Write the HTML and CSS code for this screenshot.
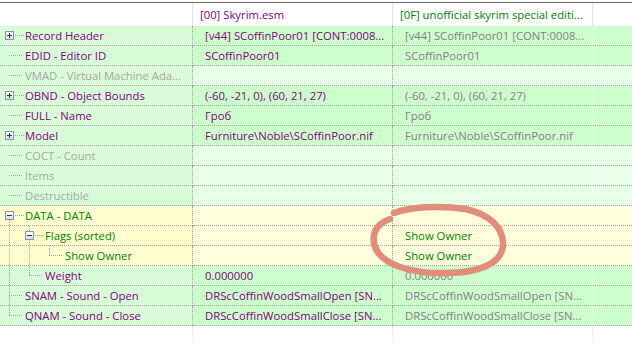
FILE: index.html
```html
<!DOCTYPE html>
<html>
  <head>
  <link rel="stylesheet" href="styles.css">
  </head>
  <body>
    <div class="tree">
      <div class="head">
        <div class="hc"></div>
        <div class="hc pu">[00] Skyrim.esm</div>
        <div class="hc gn">[0F] unofficial skyrim special editi...</div>
        <div class="hc last"></div>
      </div>

      <div class="row std">
        <div class="cell c1"><span class="tw boxh"><i class="box plus"></i></span><span class="name pu">Record Header</span></div>
        <div class="cell c2 pu">[v44] SCoffinPoor01 [CONT:0008...</div>
        <div class="cell c3 dim">[v44] SCoffinPoor01 [CONT:0008...</div>
        <div class="cell c4"></div>
      </div>
      <div class="row std">
        <div class="cell c1"><span class="tw h"></span><span class="name pu">EDID - Editor ID</span></div>
        <div class="cell c2 pu">SCoffinPoor01</div>
        <div class="cell c3 dim">SCoffinPoor01</div>
        <div class="cell c4"></div>
      </div>
      <div class="row emp">
        <div class="cell c1"><span class="tw h"></span><span class="name gr">VMAD - Virtual Machine Ada...</span></div>
        <div class="cell c2"></div>
        <div class="cell c3"></div>
        <div class="cell c4"></div>
      </div>
      <div class="row std">
        <div class="cell c1"><span class="tw boxh"><i class="box plus"></i></span><span class="name pu">OBND - Object Bounds</span></div>
        <div class="cell c2 pu">(-60, -21, 0), (60, 21, 27)</div>
        <div class="cell c3 dim">(-60, -21, 0), (60, 21, 27)</div>
        <div class="cell c4"></div>
      </div>
      <div class="row std">
        <div class="cell c1"><span class="tw h"></span><span class="name pu">FULL - Name</span></div>
        <div class="cell c2 pu">Гроб</div>
        <div class="cell c3 dim">Гроб</div>
        <div class="cell c4"></div>
      </div>
      <div class="row std">
        <div class="cell c1"><span class="tw boxh"><i class="box plus"></i></span><span class="name pu">Model</span></div>
        <div class="cell c2 pu">Furniture\Noble\SCoffinPoor.nif</div>
        <div class="cell c3 dim">Furniture\Noble\SCoffinPoor.nif</div>
        <div class="cell c4"></div>
      </div>
      <div class="row emp">
        <div class="cell c1"><span class="tw h"></span><span class="name gr">COCT - Count</span></div>
        <div class="cell c2"></div>
        <div class="cell c3"></div>
        <div class="cell c4"></div>
      </div>
      <div class="row emp">
        <div class="cell c1"><span class="tw h"></span><span class="name gr">Items</span></div>
        <div class="cell c2"></div>
        <div class="cell c3"></div>
        <div class="cell c4"></div>
      </div>
      <div class="row emp">
        <div class="cell c1"><span class="tw h"></span><span class="name gr">Destructible</span></div>
        <div class="cell c2"></div>
        <div class="cell c3"></div>
        <div class="cell c4"></div>
      </div>
      <div class="row dat">
        <div class="cell c1"><span class="tw boxdown"><i class="box"></i></span><span class="name gn">DATA - DATA</span></div>
        <div class="cell c2"></div>
        <div class="cell c3"></div>
        <div class="cell c4"></div>
      </div>
      <div class="row dat">
        <div class="cell c1"><span class="ind pipe"></span><span class="tw boxtee"><i class="box"></i></span><span class="name gn">Flags (sorted)</span></div>
        <div class="cell c2"></div>
        <div class="cell c3 gn">Show Owner</div>
        <div class="cell c4"></div>
      </div>
      <div class="row dat">
        <div class="cell c1"><span class="ind pipe"></span><span class="ind pipe"></span><span class="tw end"></span><span class="name gn">Show Owner</span></div>
        <div class="cell c2"></div>
        <div class="cell c3 gn">Show Owner</div>
        <div class="cell c4"></div>
      </div>
      <div class="row std">
        <div class="cell c1"><span class="ind pipe"></span><span class="tw end"></span><span class="name pu">Weight</span></div>
        <div class="cell c2 pu">0.000000</div>
        <div class="cell c3 dim">0.000000</div>
        <div class="cell c4"></div>
      </div>
      <div class="row std">
        <div class="cell c1"><span class="tw tee"></span><span class="name pu">SNAM - Sound - Open</span></div>
        <div class="cell c2 pu">DRScCoffinWoodSmallOpen [SN...</div>
        <div class="cell c3 dim">DRScCoffinWoodSmallOpen [SN...</div>
        <div class="cell c4"></div>
      </div>
      <div class="row std">
        <div class="cell c1"><span class="tw end"></span><span class="name pu">QNAM - Sound - Close</span></div>
        <div class="cell c2 pu">DRScCoffinWoodSmallClose [SN...</div>
        <div class="cell c3 dim">DRScCoffinWoodSmallClose [SN...</div>
        <div class="cell c4"></div>
      </div>

      <div class="filler">
        <div class="fc"></div><div class="fc"></div><div class="fc"></div><div class="fc last"></div>
      </div>

      <!-- hand drawn marker round the flags -->
      <svg class="mark" width="632" height="342" viewBox="0 0 632 342">
        <path d="M 394 213 C 410 207, 440 205, 465 209 C 490 214, 504 228, 503 246 C 501 264, 478 273, 446 273 C 415 274, 386 266, 377 251 C 370 238, 374 224, 390 219" fill="none" stroke="#e08e7b" stroke-width="6.5" stroke-linecap="round" stroke-linejoin="round"/>
      </svg>
    </div>
  </body>
</html>
```

FILE: styles.css
```css
body {
  margin: 0;
  background-color: #fff;
  font-family: "Open Sans", "Noto Sans", sans-serif;
  font-size: 11.3px;
}
.tree {
  position: relative;
  width: 632px;
  height: 342px;
  overflow: hidden;
  display: flex;
  flex-direction: column;
}
.head {
  display: grid;
  grid-template-columns: 193px 200px 200px 1fr;
  margin-top: 2px;
  height: 24px;
  box-sizing: border-box;
  border-top: 1px solid #6b6b6b;
  flex: none;
}
.hc {
  border-right: 1px solid #e2e2e2;
  padding: 0 4px 0 7px;
  line-height: 23px;
  white-space: nowrap;
  overflow: hidden;
}
.hc.last { border-right: none; }

.row {
  display: grid;
  grid-template-columns: 193px 200px 200px 1fr;
  height: 20px;
  flex: none;
}
.cell {
  border-bottom: 1px dotted #a0a0a0;
  line-height: 19px;
  height: 19px;
  white-space: nowrap;
  overflow: hidden;
}
.c1 {
  display: flex;
  border-right: 1px dotted #a0a0a0;
}
.c2 {
  border-right: 1px dotted #a0a0a0;
  padding: 0 4px 0 12px;
}
.c3 {
  border-right: 1px dotted #fff;
  padding: 0 4px 0 12px;
}
.name {
  padding-left: 1px;
  min-width: 0;
  overflow: hidden;
}

.std .c1, .emp .c1 { background-color: #d8fcd8; }
.std .c2, .std .c3, .std .c4 { background-color: #ccffcc; }
.emp .c2, .emp .c3, .emp .c4 { background-color: #e8ffe8; }
.dat .c1 { background-color: #ffffd0; }
.dat .c2, .dat .c3, .dat .c4 { background-color: #ffffdc; }

.pu { color: #800080; }
.gr { color: #a6a6a6; }
.gn { color: #008000; }
.dim { color: #887a88; }

/* tree lines */
.tw, .ind {
  display: block;
  flex: none;
  height: 19px;
  background-repeat: no-repeat;
}
.tw { width: 24px; }
.ind { width: 20px; }
.h {
  background-image: repeating-linear-gradient(90deg, #a0a0a0 0 1px, transparent 1px 2px);
  background-size: 14px 1px;
  background-position: 9px 9px;
}
.boxh {
  background-image: repeating-linear-gradient(90deg, #a0a0a0 0 1px, transparent 1px 2px);
  background-size: 9px 1px;
  background-position: 15px 9px;
}
.boxdown {
  background-image:
    repeating-linear-gradient(90deg, #a0a0a0 0 1px, transparent 1px 2px),
    repeating-linear-gradient(180deg, #a0a0a0 0 1px, transparent 1px 2px);
  background-size: 9px 1px, 1px 5px;
  background-position: 15px 9px, 9px 14px;
}
.boxtee {
  background-image:
    repeating-linear-gradient(90deg, #a0a0a0 0 1px, transparent 1px 2px),
    repeating-linear-gradient(180deg, #a0a0a0 0 1px, transparent 1px 2px),
    repeating-linear-gradient(180deg, #a0a0a0 0 1px, transparent 1px 2px);
  background-size: 9px 1px, 1px 5px, 1px 5px;
  background-position: 15px 9px, 9px 0, 9px 14px;
}
.pipe {
  background-image: repeating-linear-gradient(180deg, #a0a0a0 0 1px, transparent 1px 2px);
  background-size: 1px 19px;
  background-position: 9px 0;
}
.tee {
  background-image:
    repeating-linear-gradient(90deg, #a0a0a0 0 1px, transparent 1px 2px),
    repeating-linear-gradient(180deg, #a0a0a0 0 1px, transparent 1px 2px);
  background-size: 14px 1px, 1px 19px;
  background-position: 9px 9px, 9px 0;
}
.end {
  background-image:
    repeating-linear-gradient(90deg, #a0a0a0 0 1px, transparent 1px 2px),
    repeating-linear-gradient(180deg, #a0a0a0 0 1px, transparent 1px 2px);
  background-size: 14px 1px, 1px 10px;
  background-position: 9px 9px, 9px 0;
}
.box {
  display: block;
  width: 9px;
  height: 9px;
  box-sizing: border-box;
  margin: 5px 0 0 5px;
  border: 1px solid #8b96a4;
  background:
    linear-gradient(#2f3b4c, #2f3b4c) center / 5px 1px no-repeat,
    linear-gradient(#ffffff, #d9dde3);
}
.box.plus {
  background:
    linear-gradient(#2f3b4c, #2f3b4c) center / 5px 1px no-repeat,
    linear-gradient(#2f3b4c, #2f3b4c) center / 1px 5px no-repeat,
    linear-gradient(#ffffff, #d9dde3);
}

.filler {
  flex: 1;
  display: grid;
  grid-template-columns: 193px 200px 200px 1fr;
}
.fc { border-right: 1px dotted #e2e2e2; }
.fc.last { border-right: none; }

.mark {
  position: absolute;
  left: 0;
  top: 0;
  pointer-events: none;
}
```
